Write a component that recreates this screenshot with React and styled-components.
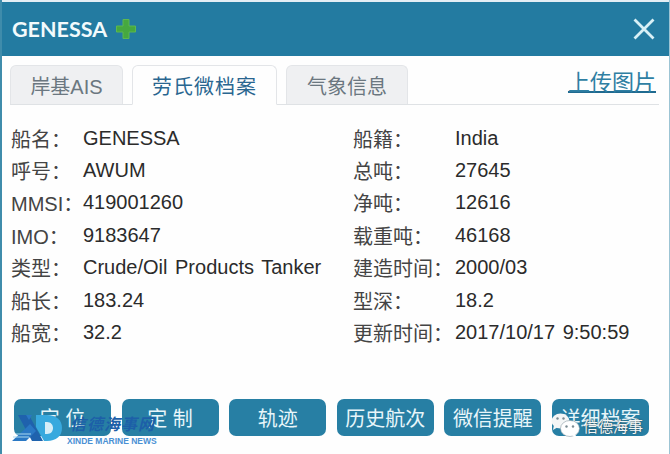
import React from 'react';
import styled, { createGlobalStyle } from 'styled-components';

const GlobalStyle = createGlobalStyle`
  html, body { margin: 0; padding: 0; background: #fefefe; }
  body { font-family: "Liberation Sans", "Noto Sans CJK SC", sans-serif; }
`;

const leftRows = [
  ['船名：', 'GENESSA'],
  ['呼号：', 'AWUM'],
  ['MMSI：', '419001260'],
  ['IMO：', '9183647'],
  ['类型：', 'Crude/Oil Products Tanker'],
  ['船长：', '183.24'],
  ['船宽：', '32.2'],
];

const rightRows = [
  ['船籍：', 'India'],
  ['总吨：', '27645'],
  ['净吨：', '12616'],
  ['载重吨：', '46168'],
  ['建造时间：', '2000/03'],
  ['型深：', '18.2'],
  ['更新时间：', '2017/10/17 9:50:59'],
];

const buttons = ['定 位', '定 制', '轨迹', '历史航次', '微信提醒', '详细档案'];

const App = () => (
  <>
    <GlobalStyle />
    <Page>
      <TopStrip />
      <Header>
        <Title>
          GENESSA
          <svg width="22" height="22" viewBox="0 0 22 22">
            <path d="M8 1.5h6v6.5h6.5v6H14v6.5H8V14H1.5V8H8z" fill="#46a83f" stroke="#5cb84f" strokeLinejoin="round" />
          </svg>
        </Title>
        <svg width="24" height="24" viewBox="0 0 24 24">
          <path d="M2.5 2.5l19 19M21.5 2.5l-19 19" stroke="#d8f0f6" strokeWidth="2.8" fill="none" />
        </svg>
      </Header>
      <Body>
        <TabBar>
          <Tab>岸基AIS</Tab>
          <Tab $active>劳氏微档案</Tab>
          <Tab $wide>气象信息</Tab>
          <UploadLink>上传图片</UploadLink>
        </TabBar>
        <Info>
          <Column>
            {leftRows.map(([label, value]) => (
              <Row key={label} $labelWidth={72}>
                <Label>{label}</Label>
                <span>{value}</span>
              </Row>
            ))}
          </Column>
          <Column>
            {rightRows.map(([label, value]) => (
              <Row key={label} $labelWidth={102}>
                <Label>{label}</Label>
                <span>{value}</span>
              </Row>
            ))}
          </Column>
        </Info>
        <ButtonBar>
          {buttons.map(text => (
            <ActionButton key={text}>{text}</ActionButton>
          ))}
        </ButtonBar>
      </Body>
      <LogoMark>
        <svg width="50" height="26" viewBox="0 0 50 26">
          <path d="M6 0h11l14 26H20z" fill="#1f62ad" />
          <path d="M18 9l6 7-10 10H0l14-13z" fill="#2a78c4" />
          <path d="M1 22h16M4 19h15" stroke="#a9d8ef" strokeWidth="1" />
          <path d="M14 0h6l-3 5z" fill="#2a78c4" />
          <path d="M24 0h11c9 0 15 5 15 13s-6 13-15 13h-3L24 12z" fill="#38a9de" />
          <path d="M33 7h2c4 0 6 3 6 6s-2 6-6 6h-2z" fill="#d6eef8" />
        </svg>
        <LogoText>
          <LogoName>信德海事网</LogoName>
          <LogoSub>XINDE MARINE NEWS</LogoSub>
        </LogoText>
      </LogoMark>
      <WechatMark>
        <svg width="29" height="25" viewBox="0 0 29 25">
          <ellipse cx="9.5" cy="8" rx="9" ry="7.5" fill="#f4f6f6" />
          <path d="M3 12l-1 5 5-3z" fill="#f4f6f6" />
          <ellipse cx="19" cy="15.5" rx="9.5" ry="8" fill="#fff" stroke="#8a9aa2" strokeWidth="0.6" />
          <path d="M24 21l2 4-5-2z" fill="#fff" />
          <circle cx="6.5" cy="5.5" r="1.2" fill="#7b8b92" />
          <circle cx="12.5" cy="5.5" r="1.2" fill="#7b8b92" />
          <circle cx="15.5" cy="13.5" r="1.2" fill="#7b8b92" />
          <circle cx="22" cy="13.5" r="1.2" fill="#7b8b92" />
        </svg>
        <WechatText>信德海事</WechatText>
      </WechatMark>
    </Page>
  </>
);

export default App;

const Page = styled.div`
  position: relative;
  width: 670px;
  height: 454px;
  overflow: hidden;
  box-sizing: border-box;
  border-left: 2px solid #3f8cab;
  border-right: 1px solid #9cc4d4;
`;

const TopStrip = styled.div`
  height: 2px;
  background: #e4eef4;
`;

const Header = styled.div`
  height: 54px;
  background: #237ba1;
  display: flex;
  align-items: center;
  justify-content: space-between;
  padding: 0 13px 0 10px;
`;

const Title = styled.div`
  display: flex;
  align-items: center;
  gap: 8px;
  color: #f2fafc;
  font-family: Lato, sans-serif;
  font-size: 21.5px;
  font-weight: 700;
`;

const Body = styled.div`
  padding: 9px 10px 0 8px;
`;

const TabBar = styled.div`
  display: flex;
  align-items: flex-end;
  gap: 9px;
  height: 40px;
  box-sizing: border-box;
  border-bottom: 1px solid #dfe2e5;
`;

const Tab = styled.div`
  box-sizing: border-box;
  width: ${p => (p.$active ? 145 : p.$wide ? 122 : 113)}px;
  height: ${p => (p.$active ? 40 : 39)}px;
  margin-bottom: ${p => (p.$active ? -1 : 0)}px;
  display: flex;
  align-items: center;
  justify-content: center;
  border: 1px solid #e3e5e8;
  border-bottom: ${p => (p.$active ? '1px solid #fefefe' : 'none')};
  border-radius: 6px 6px 0 0;
  background: ${p => (p.$active ? '#fefefe' : '#eff0f2')};
  color: ${p => (p.$active ? '#2a6690' : '#6b7780')};
  font-size: 20px;
  letter-spacing: ${p => (p.$active ? 1 : 0)}px;
`;

const UploadLink = styled.a`
  margin: 0 3px 8px auto;
  color: #2f7fa3;
  font-size: 22px;
  line-height: 26px;
  text-decoration: underline;
  text-decoration-color: #1f6a90;
  text-underline-offset: 1px;
`;

const Info = styled.div`
  display: grid;
  grid-template-columns: 342px 1fr;
  padding: 17px 0 0 1px;
`;

const Column = styled.div`
  display: flex;
  flex-direction: column;
`;

const Row = styled.div`
  display: grid;
  grid-template-columns: ${p => p.$labelWidth}px 1fr;
  height: 32.4px;
  align-items: center;
  color: #2b2b2b;
  font-size: 20px;
  word-spacing: 2px;
  white-space: nowrap;
`;

const Label = styled.span`
  color: #444;
`;

const ButtonBar = styled.div`
  display: flex;
  gap: 10.6px;
  padding: 50px 0 0 4px;
`;

const ActionButton = styled.div`
  width: 97px;
  height: 37px;
  display: flex;
  align-items: center;
  justify-content: center;
  background: #277fa4;
  border-radius: 7px;
  color: #e8f6fa;
  font-size: 20px;
`;

const LogoMark = styled.div`
  position: absolute;
  left: 10px;
  top: 415px;
  display: flex;
  align-items: flex-start;
  gap: 7px;
`;

const LogoText = styled.div`
  display: flex;
  flex-direction: column;
`;

const LogoName = styled.div`
  color: #1d5fa8;
  font-size: 16px;
  font-weight: 700;
  font-style: italic;
  letter-spacing: 1px;
  line-height: 20px;
  margin-left: 1px;
`;

const LogoSub = styled.div`
  color: #4a90d4;
  font-size: 8.5px;
  font-weight: 700;
  line-height: 8px;
  margin-top: 2px;
  margin-left: -2px;
`;

const WechatMark = styled.div`
  position: absolute;
  left: 549px;
  top: 413px;
  display: flex;
  align-items: center;
  gap: 3px;
`;

const WechatText = styled.div`
  color: #f4f6f6;
  font-size: 15px;
  text-shadow: 0 0 2px #33444c;
`;
